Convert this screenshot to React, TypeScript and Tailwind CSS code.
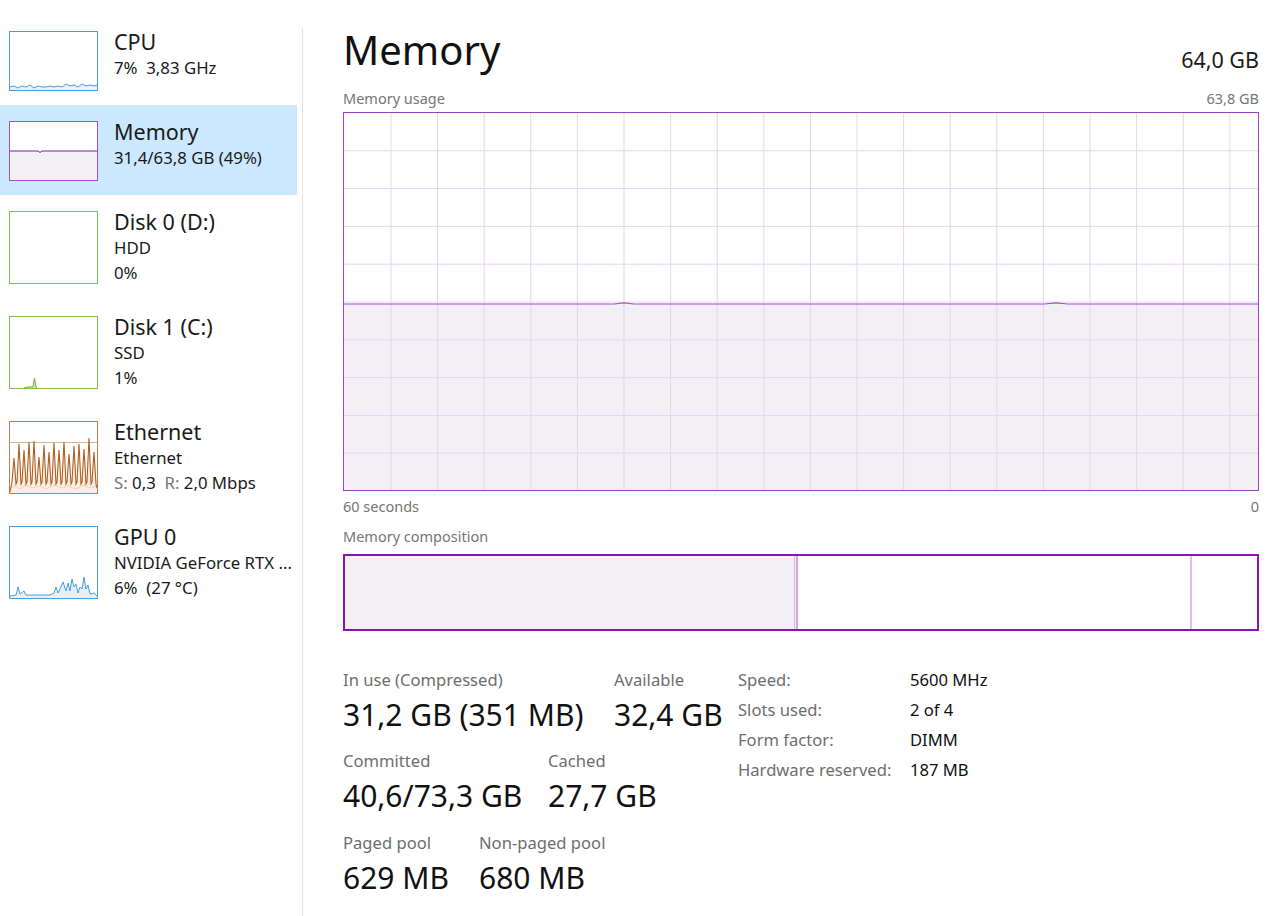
import type { ReactNode } from 'react';

const FONT = { fontFamily: '"Noto Sans", "Open Sans", sans-serif' };

function Thumb({ color, h, children }: { color: string; h: number; children?: ReactNode }) {
  return (
    <div className="w-[89px] shrink-0 border bg-white" style={{ borderColor: color, height: h }}>
      <svg width="87" height={h - 2} viewBox={`0 0 87 ${h - 2}`} className="block">
        {children}
      </svg>
    </div>
  );
}

function SideItem({ thumb, title, lines, selected }: { thumb: ReactNode; title: string; lines: ReactNode[]; selected?: boolean }) {
  return (
    <div className={`flex gap-4 pl-[9px] pt-4 ${selected ? 'bg-[#cce8ff]' : ''} ${lines.length > 1 ? 'h-[105px]' : 'h-[90px]'}`}>
      {thumb}
      <div className="-mt-[3px] flex flex-col">
        <div className="text-[21.5px] leading-[27px] text-[#1a1a1a]">{title}</div>
        {lines.map((l, i) => (
          <div key={i} className="text-[16.8px] leading-[25px] text-[#1a1a1a] whitespace-pre">{l}</div>
        ))}
      </div>
    </div>
  );
}

const ethSpikes = [4, 9, 14, 19, 24, 29, 34, 39, 44, 49, 54, 59, 64, 69, 74, 79, 84];
const ethHeights = [36, 22, 28, 20, 19, 35, 23, 30, 21, 28, 20, 32, 24, 22, 27, 16, 30];

function Sidebar() {
  const cpu = 'M0 55 L4 54 L8 56 L12 54 L16 55 L20 53 L24 56 L28 54 L32 55 L36 55 L40 54 L44 55 L48 54 L52 55 L56 52 L60 54 L64 53 L68 55 L72 52 L76 54 L80 53 L84 54 L87 53';
  let eth = 'M0 70';
  ethSpikes.forEach((x, i) => {
    eth += ` L${x - 2} 60 L${x} ${ethHeights[i]} L${x + 2} 62`;
  });
  eth += ' L87 66';
  const gpu = 'M0 69 L6 68 L8 60 L10 67 L14 64 L16 68 L30 68 L40 68 L44 66 L46 60 L48 66 L50 62 L53 55 L56 64 L58 56 L60 64 L62 52 L64 60 L66 57 L68 66 L70 60 L72 62 L74 50 L76 62 L78 58 L80 67 L84 66 L87 69';
  return (
    <div className="w-[297px] shrink-0 pt-[15px]">
      <SideItem
        title="CPU"
        lines={['7%  3,83 GHz']}
        thumb={
          <Thumb color="#4a9fd6" h={60}>
            <path d={cpu + ' L87 58 L0 58 Z'} fill="#e6f2fa" />
            <path d={cpu} fill="none" stroke="#4a9fd6" strokeWidth="1" />
          </Thumb>
        }
      />
      <SideItem
        selected
        title="Memory"
        lines={['31,4/63,8 GB (49%)']}
        thumb={
          <Thumb color="#a34fc2" h={60}>
            <rect x="0" y="29" width="87" height="29" fill="#f2f0f4" />
            <path d="M0 29 L28 29 L30 30.5 L32 29 L87 29" fill="none" stroke="#8b12ae" strokeWidth="1" />
          </Thumb>
        }
      />
      <SideItem title="Disk 0 (D:)" lines={['HDD', '0%']} thumb={<Thumb color="#7cbf52" h={73} />} />
      <SideItem
        title="Disk 1 (C:)"
        lines={['SSD', '1%']}
        thumb={
          <Thumb color="#7cbf52" h={73}>
            <path d="M14 71 L16 70 L19 70 L21 70 L23 70 L24.5 61 L26 70 L27 71 Z" fill="#d6ecc7" />
            <path d="M14 71 L18 70 L23 70 L24.5 61 L26 70 L27 71" fill="none" stroke="#6ab23a" strokeWidth="1" />
          </Thumb>
        }
      />
      <SideItem
        title="Ethernet"
        lines={[
          'Ethernet',
          <span key="s">
            <span className="text-[#767676]">S:</span> 0,3  <span className="text-[#767676]">R:</span> 2,0 Mbps
          </span>,
        ]}
        thumb={
          <Thumb color="#c87d47" h={73}>
            <line x1="0" y1="20.5" x2="87" y2="20.5" stroke="#dfb293" strokeWidth="1" />
            <path d={eth + ' L87 71 L0 71 Z'} fill="#fbeee6" />
            <path d="M0 66 L6 64 L10 67 L16 63 L22 66 L30 64 L36 67 L44 63 L52 66 L58 64 L66 67 L74 63 L80 66 L87 64" fill="none" stroke="#e7b9a0" strokeWidth="0.8" strokeDasharray="2 1" />
            <path d={eth} fill="none" stroke="#b0601f" strokeWidth="1.1" />
          </Thumb>
        }
      />
      <SideItem
        title="GPU 0"
        lines={['NVIDIA GeForce RTX ...', '6%  (27 °C)']}
        thumb={
          <Thumb color="#4a9fd6" h={73}>
            <path d={gpu + ' L87 71 L0 71 Z'} fill="#e4f1fa" />
            <path d={gpu} fill="none" stroke="#4a9fd6" strokeWidth="1" />
          </Thumb>
        }
      />
    </div>
  );
}

function UsageChart() {
  const vx = Array.from({ length: 19 }, (_, i) => 47 + i * 46.6);
  const hy = Array.from({ length: 9 }, (_, i) => 37.8 * (i + 1));
  return (
    <div className="h-[379px] w-full border border-[#9c3fc0]">
      <svg width="100%" height="100%" viewBox="0 0 914 377" preserveAspectRatio="none" className="block">
        <rect x="0" y="191" width="914" height="186" fill="#f2f0f4" />
        {vx.map((x) => (
          <line key={x} x1={x} y1="0" x2={x} y2="377" stroke="#e8d3ef" strokeWidth="1" />
        ))}
        {hy.map((y) => (
          <line key={y} x1="0" y1={y} x2="914" y2={y} stroke="#e8d3ef" strokeWidth="1" />
        ))}
        <path d="M0 191 L270 191 L280 189.8 L290 191 L700 191 L712 189.8 L724 191 L914 191" fill="none" stroke="#a34fc2" strokeWidth="1.2" />
      </svg>
    </div>
  );
}

function Stat({ label, value, className }: { label: string; value: string; className?: string }) {
  return (
    <div className={className}>
      <div className="text-[16.6px] leading-[22px] text-[#6e6e6e]">{label}</div>
      <div className="mt-[5px] text-[30px] leading-[38px] text-[#111]">{value}</div>
    </div>
  );
}

const specs = [
  ['Speed:', '5600 MHz'],
  ['Slots used:', '2 of 4'],
  ['Form factor:', 'DIMM'],
  ['Hardware reserved:', '187 MB'],
];

export default function App() {
  return (
    <div className="flex h-[916px] w-[1280px] overflow-hidden bg-white" style={FONT}>
      <Sidebar />
      <div className="ml-[5px] mt-[28px] w-px bg-[#e3e3e3]" />
      <div className="flex-1 pl-[40px] pr-[21px]">
        <div className="flex items-end justify-between pt-[24px]">
          <h1 className="text-[40px] leading-[52px] text-[#111]">Memory</h1>
          <div className="mb-[3px] text-[21.5px] leading-[26px] text-[#1a1a1a]">64,0 GB</div>
        </div>
        <div className="mt-[12px] flex justify-between text-[14.5px] leading-[20px] text-[#767676]">
          <span>Memory usage</span>
          <span>63,8 GB</span>
        </div>
        <div className="mt-[4px]">
          <UsageChart />
        </div>
        <div className="mt-[5px] flex justify-between text-[14.5px] leading-[20px] text-[#767676]">
          <span>60 seconds</span>
          <span>0</span>
        </div>
        <div className="mt-[10px] text-[14.5px] leading-[20px] text-[#767676]">Memory composition</div>
        <div className="mt-[8px] flex h-[77px] border-2 border-[#8b12ae]">
          <div className="w-[450px] border-r border-[#d8b8e2] bg-[#f2f0f4]" />
          <div className="w-[3px] border-r-2 border-[#d2a8de] bg-[#f4eaf6]" />
          <div className="w-[394px] border-r-2 border-[#dcc0e6]" />
          <div className="flex-1" />
        </div>
        <div className="mt-[38px] flex">
          <div className="w-[395px]">
            <div className="flex">
              <Stat label="In use (Compressed)" value="31,2 GB (351 MB)" className="w-[271px]" />
              <Stat label="Available" value="32,4 GB" />
            </div>
            <div className="mt-[16px] flex">
              <Stat label="Committed" value="40,6/73,3 GB" className="w-[205px]" />
              <Stat label="Cached" value="27,7 GB" />
            </div>
            <div className="mt-[17px] flex">
              <Stat label="Paged pool" value="629 MB" className="w-[136px]" />
              <Stat label="Non-paged pool" value="680 MB" />
            </div>
          </div>
          <div className="flex flex-col">
            {specs.map(([k, v]) => (
              <div key={k} className="flex h-[30px] text-[16.6px] leading-[22px]">
                <span className="w-[172px] text-[#6e6e6e]">{k}</span>
                <span className="text-[#111]">{v}</span>
              </div>
            ))}
          </div>
        </div>
      </div>
    </div>
  );
}
